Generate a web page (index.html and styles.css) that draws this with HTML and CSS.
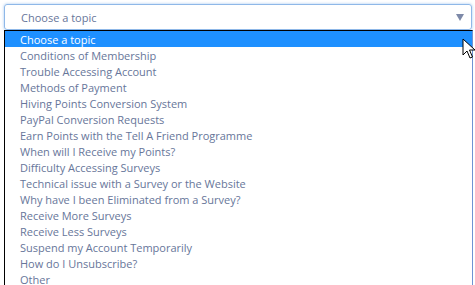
FILE: index.html
```html
<!DOCTYPE html>
<html lang="en">
<head>
    <meta charset="UTF-8">
    <title>Contact</title>
    <link rel="stylesheet" href="styles.css">
</head>
<body>
    <div class="field">
        <div class="select">
            <span>Choose a topic</span>
            <span class="arrow"></span>
        </div>
        <ul class="options">
            <li class="selected">Choose a topic</li>
            <li>Conditions of Membership</li>
            <li>Trouble Accessing Account</li>
            <li>Methods of Payment</li>
            <li>Hiving Points Conversion System</li>
            <li>PayPal Conversion Requests</li>
            <li>Earn Points with the Tell A Friend Programme</li>
            <li>When will I Receive my Points?</li>
            <li>Difficulty Accessing Surveys</li>
            <li>Technical issue with a Survey or the Website</li>
            <li>Why have I been Eliminated from a Survey?</li>
            <li>Receive More Surveys</li>
            <li>Receive Less Surveys</li>
            <li>Suspend my Account Temporarily</li>
            <li>How do I Unsubscribe?</li>
            <li>Other</li>
        </ul>
        <svg class="cursor" width="14" height="22" viewBox="0 0 14 22">
            <path d="M1 1 L1 17 L5 13 L8 20 L10.5 19 L7.5 12 L13 12 Z" fill="#fff" stroke="#000" stroke-width="1" stroke-linejoin="round"/>
        </svg>
    </div>
</body>
</html>
```
FILE: styles.css
```css
body {
    margin: 0;
    background: #fff;
    font-family: "Open Sans", "Liberation Sans", sans-serif;
    font-size: 11px;
    color: #67769a;
    overflow: hidden;
}
.field {
    position: relative;
    padding: 4px 3px 0 4px;
}
.select {
    height: 24px;
    border: 1px solid #8fb8e8;
    border-radius: 3px;
    box-shadow: 0 0 3px rgba(100, 160, 230, 0.6);
    display: flex;
    align-items: center;
    justify-content: space-between;
    padding: 0 7px 0 16px;
}
.arrow {
    width: 0;
    height: 0;
    border-left: 4px solid transparent;
    border-right: 4px solid transparent;
    border-top: 7px solid #7d89a8;
}
.options {
    list-style: none;
    margin: 0;
    padding: 0;
    width: 467px;
    border-top: 1px solid #000;
    border-left: 1px solid #000;
    border-right: 1px solid #6f93d3;
}
.options li {
    height: 15px;
    padding-top: 1px;
    line-height: 16px;
    padding-left: 15px;
    white-space: nowrap;
}
.options .selected {
    background: #1e90ff;
    color: #fff;
}
.cursor {
    position: absolute;
    left: 462px;
    top: 38px;
}
```
